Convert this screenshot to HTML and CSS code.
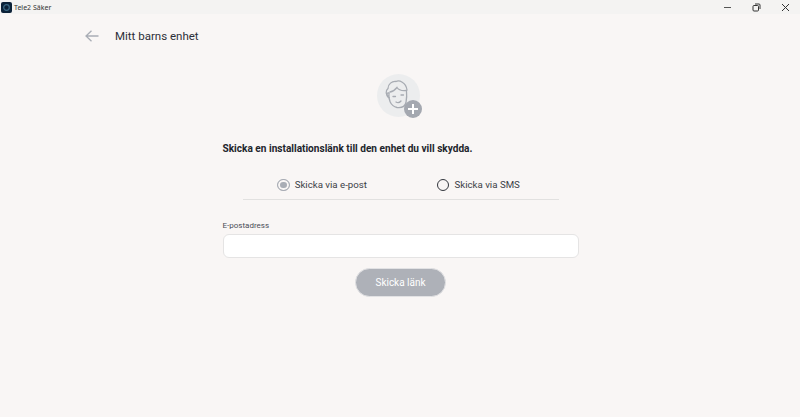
FILE: index.html
```html
<!DOCTYPE html>
<html lang="sv">
<head>
  <meta charset="UTF-8">
  <title>Tele2 Säker</title>
  <link rel="stylesheet" href="styles.css">
</head>
<body>
<div class="titlebar">
  <div class="app-name">
    <svg class="app-icon" width="11" height="11" viewBox="0 0 11 11"><rect width="11" height="11" rx="2" fill="#0c2238"/><circle cx="5.5" cy="5.5" r="2.8" fill="none" stroke="#3d6a85" stroke-width="1.2"/></svg>
    <span>Tele2 Säker</span>
  </div>
  <div class="win-buttons">
    <svg width="9" height="9" viewBox="0 0 9 9"><path d="M1 4.5h7" stroke="#555" stroke-width="1"/></svg>
    <svg width="9" height="9" viewBox="0 0 9 9"><rect x="1" y="2.5" width="5.5" height="5.5" rx="1" fill="none" stroke="#333" stroke-width="1"/><path d="M3 1h4a1 1 0 0 1 1 1v4" fill="none" stroke="#333" stroke-width="1"/></svg>
    <svg width="9" height="9" viewBox="0 0 9 9"><path d="M1 1l7 7M8 1l-7 7" stroke="#333" stroke-width="1"/></svg>
  </div>
</div>
<div class="header">
  <svg class="back" width="14" height="12" viewBox="0 0 14 12"><path d="M13.500 6H1M6.500 .7L1 6l5.500 5.300" fill="none" stroke="#a9adb5" stroke-width="1.300"/></svg>
  <h1>Mitt barns enhet</h1>
</div>
<div class="content">
  <div class="avatar">
    <svg width="46" height="46" viewBox="0 0 46 46">
      <circle cx="21.500" cy="21.500" r="21.500" fill="#ecedee"/>
      <g fill="none" stroke="#a7abb2" stroke-width="1.300" stroke-linecap="round">
        <path d="M11.500 22c-2.500-1-3.500-5-.5-7.500 0-4.500 4-7.500 8-7 3-1.500 10 .5 11 8.500"/>
        <path d="M13 18c3-.5 5-2 7-4.500 1.500 2.500 5 3.500 9.500 3"/>
        <path d="M12 19c-1 6 1.500 13 8 14.500 4 .5 8-1 9-5 .5-3 1-7 .5-11"/>
        <path d="M11.800 19c-1.500-.5-2.300 1-1.800 2.500.4 1.200 1.300 2 2.300 1.800"/>
        <path d="M16 22.500h2.500M24 21h2.500M19 28c1.500 1 3.500 .8 5-1"/>
      </g>
      <circle cx="36" cy="35" r="9" fill="#a4a8b0"/>
      <path d="M36 30v10M31 35h10" stroke="#fff" stroke-width="2"/>
    </svg>
  </div>
  <p class="lead">Skicka en installationslänk till den enhet du vill skydda.</p>
  <div class="choices">
    <div class="choice">
      <span class="radio radio-on"></span>
      <span class="choice-text">Skicka via e-post</span>
    </div>
    <div class="choice">
      <span class="radio"></span>
      <span class="choice-text">Skicka via SMS</span>
    </div>
  </div>
  <label class="field-label" for="email">E-postadress</label>
  <input class="field" id="email" type="text">
  <button class="send" type="button">Skicka länk</button>
</div>
</body>
</html>
```

FILE: styles.css
```css
body {
  margin: 0;
  height: 417px;
  overflow: hidden;
  background: #f9f6f5;
  font-family: 'Roboto', sans-serif;
  color: #2c2f38;
}
.titlebar {
  height: 14px;
  background: #f4f3f2;
  display: flex;
  justify-content: space-between;
  align-items: center;
}
.app-name {
  display: flex;
  align-items: center;
  gap: 2px;
  padding-left: 1px;
  font-family: 'Noto Sans', sans-serif;
  font-size: 7px;
  color: #333;
}
.win-buttons {
  display: flex;
  gap: 20px;
  padding-right: 10px;
}
.header {
  display: flex;
  align-items: center;
  padding: 15px 0 0 85px;
  height: 14px;
}
.back {
  margin-right: 16px;
}
.header h1 {
  margin: 0;
  font-size: 11.500px;
  font-weight: 400;
}
.content {
  width: 356px;
  margin: 0 auto;
  padding: 31px 0 0 1px;
  display: flex;
  flex-direction: column;
}
.avatar {
  height: 45px;
  align-self: center;
  margin-right: 1px;
}
.lead {
  margin: 23px 0 0;
  font-size: 10.100px;
  line-height: 13px;
  font-weight: 700;
  color: #22252c;
}
.choices {
  display: flex;
  justify-content: center;
  gap: 70px;
  margin: 23px 20px 0;
  padding: 0 4px 7px 0;
  border-bottom: 1px solid #e2e1e0;
}
.choice {
  display: flex;
  align-items: center;
  gap: 5px;
  font-size: 9.700px;
  line-height: 14px;
  color: #3b3e46;
}
.radio {
  width: 10.500px;
  height: 10.500px;
  border: 1.300px solid #33363d;
  border-radius: 50%;
  background: transparent;
  box-sizing: content-box;
}
.radio-on {
  border-color: #a9adb5;
  background: #a9adb5;
  box-shadow: inset 0 0 0 2px #f9f6f5;
}
.field-label {
  margin-top: 20px;
  font-size: 8px;
  line-height: 12px;
  color: #4a4d55;
}
.field {
  margin-top: 2px;
  height: 24px;
  box-sizing: border-box;
  border: 1px solid #e5e4e4;
  border-radius: 6px;
  background: #fff;
}
.send {
  align-self: center;
  margin-top: 10px;
  width: 91px;
  height: 29px;
  border: 1px solid #e2e2e4;
  border-radius: 15px;
  background: #aeb1b8;
  color: #fff;
  font-family: 'Roboto', sans-serif;
  font-size: 10px;
}
```
